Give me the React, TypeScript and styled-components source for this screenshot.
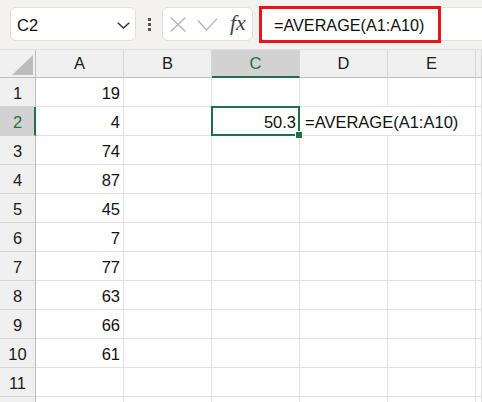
import styled, { createGlobalStyle } from "styled-components";

const GREEN = "#1e7145";

const Global = createGlobalStyle`
  html, body {
    margin: 0;
    padding: 0;
    background: #ffffff;
    overflow: hidden;
  }
  body {
    font-family: "Liberation Sans", Arial, sans-serif;
    color: #1b1b1b;
  }
`;

const Page = styled.div`
  width: 482px;
  height: 402px;
  overflow: hidden;
  background: #fff;
`;

// formula bar row
const Toolbar = styled.div`
  height: 50px;
  box-sizing: border-box;
  background: #f3f2f1;
  border-bottom: 1px solid #e1dfdd;
  display: flex;
  align-items: flex-start;
  padding: 7px 0 0 10px;
`;

const NameBox = styled.div`
  width: 126px;
  height: 34px;
  box-sizing: border-box;
  background: #fff;
  border: 1px solid #e1dfdd;
  border-radius: 6px;
  display: flex;
  align-items: center;
  justify-content: space-between;
  padding: 2px 5px 0 6px;
  font-size: 16.5px;
  color: #111;
`;

const Dots = styled.div`
  width: 26px;
  height: 34px;
  display: flex;
  flex-direction: column;
  align-items: center;
  justify-content: center;
  gap: 2px;
`;

const Dot = styled.span`
  width: 3px;
  height: 3px;
  background: #555;
`;

const FxBox = styled.div`
  width: 91px;
  height: 34px;
  box-sizing: border-box;
  background: #fff;
  border: 1px solid #e1dfdd;
  border-radius: 6px;
  display: flex;
  align-items: center;
  padding-left: 7px;
  gap: 11px;
`;

const FxLabel = styled.span`
  font-family: "Liberation Serif", "Times New Roman", serif;
  font-style: italic;
  font-size: 22px;
  color: #444;
  margin-left: 1px;
  margin-top: -3px;
`;

const FormulaField = styled.div`
  flex: 1;
  height: 34px;
  margin-left: 6px;
  box-sizing: border-box;
  background: #fff;
  border: 1px solid #e1dfdd;
  border-right: none;
  border-radius: 6px 0 0 6px;
  display: flex;
  align-items: flex-start;
`;

// red annotation round the formula text
const Highlight = styled.div`
  margin: -2px 0 0 -1px;
  width: 182px;
  height: 37px;
  box-sizing: border-box;
  border: 3px solid #e8141c;
  display: flex;
  align-items: center;
  padding: 1px 0 0 12px;
  font-size: 16.2px;
  color: #111;
  white-space: nowrap;
`;

// sheet
const Sheet = styled.div`
  display: grid;
  grid-template-columns: 36px repeat(5, 88px) 1fr;
  grid-template-rows: 28px;
  grid-auto-rows: 29px;
  font-size: 16.5px;
`;

const Corner = styled.div`
  background: #f0f0f0;
  border-right: 1px solid #bdbdbd;
  border-bottom: 1px solid #bdbdbd;
  display: flex;
  align-items: flex-end;
  justify-content: flex-end;
  padding: 0 2px 2px 0;
`;

const ColHead = styled.div<{ $active?: boolean }>`
  background: ${(p) => (p.$active ? "#d2d2d2" : "#f0f0f0")};
  color: ${(p) => (p.$active ? GREEN : "#1b1b1b")};
  border-right: 1px solid #d4d4d4;
  border-bottom: ${(p) => (p.$active ? `2px solid ${GREEN}` : "1px solid #bdbdbd")};
  display: flex;
  align-items: center;
  justify-content: center;
  padding-top: ${(p) => (p.$active ? "1px" : "0")};
`;

const RowHead = styled.div<{ $active?: boolean }>`
  background: ${(p) => (p.$active ? "#d2d2d2" : "#f0f0f0")};
  color: ${(p) => (p.$active ? GREEN : "#1b1b1b")};
  border-bottom: 1px solid #d4d4d4;
  border-right: ${(p) => (p.$active ? `2px solid ${GREEN}` : "1px solid #bdbdbd")};
  display: flex;
  align-items: center;
  justify-content: center;
  padding: ${(p) => (p.$active ? "2px 0 0 1px" : "2px 0 0 0")};
`;

const Cell = styled.div<{ $span?: number; $left?: boolean }>`
  position: relative;
  grid-column: span ${(p) => p.$span ?? 1};
  border-right: 1px solid #e1e1e1;
  border-bottom: 1px solid #e1e1e1;
  display: flex;
  align-items: center;
  justify-content: ${(p) => (p.$left ? "flex-start" : "flex-end")};
  padding: 2px ${(p) => (p.$left ? "0" : "3px")} 0 ${(p) => (p.$left ? "5px" : "0")};
  color: #111;
  white-space: nowrap;
`;

const Selection = styled.div`
  position: absolute;
  top: -1px;
  left: -1px;
  right: -1px;
  bottom: -1px;
  border: 2px solid ${GREEN};
  z-index: 2;
  pointer-events: none;
`;

const FillHandle = styled.div`
  position: absolute;
  right: -5px;
  bottom: -5px;
  width: 6px;
  height: 6px;
  background: ${GREEN};
  border: 1px solid #fff;
`;

const columns = ["A", "B", "C", "D", "E", ""];
const values = [19, 4, 74, 87, 45, 7, 77, 63, 66, 61];

function Chevron() {
  return (
    <svg width="13" height="7" viewBox="0 0 13 7">
      <polyline points="0.7,0.7 6.5,6 12.3,0.7" fill="none" stroke="#333" strokeWidth="1.5" />
    </svg>
  );
}

function CancelIcon() {
  return (
    <svg width="16" height="15" viewBox="0 0 16 15">
      <path d="M0.6 0.6 L15.4 14.4 M15.4 0.6 L0.6 14.4" stroke="#b3b3b3" strokeWidth="1.3" />
    </svg>
  );
}

function EnterIcon() {
  return (
    <svg width="21" height="13" viewBox="0 0 21 13">
      <polyline points="1,2.5 9.5,12 20,0.6" fill="none" stroke="#b3b3b3" strokeWidth="1.3" />
    </svg>
  );
}

function CornerMark() {
  return (
    <svg width="21" height="20" viewBox="0 0 21 20">
      <polygon points="21,0 21,20 0,20" fill="#bcbcbc" />
    </svg>
  );
}

function App() {
  // row 12 only peeks in at the bottom edge, its number is cut off
  const rows = Array.from({ length: 12 }, (_, i) => i + 1);
  return (
    <Page>
      <Global />
      <Toolbar>
        <NameBox>
          <span>C2</span>
          <Chevron />
        </NameBox>
        <Dots>
          <Dot />
          <Dot />
          <Dot />
        </Dots>
        <FxBox>
          <CancelIcon />
          <EnterIcon />
          <FxLabel>fx</FxLabel>
        </FxBox>
        <FormulaField>
          <Highlight>=AVERAGE(A1:A10)</Highlight>
        </FormulaField>
      </Toolbar>

      <Sheet>
        <Corner>
          <CornerMark />
        </Corner>
        {columns.map((c, i) => (
          <ColHead key={i} $active={c === "C"}>
            {c}
          </ColHead>
        ))}
        {rows.map((r) => (
          <Row key={r} r={r} />
        ))}
      </Sheet>
    </Page>
  );
}

function Row({ r }: { r: number }) {
  const v = values[r - 1];
  if (r === 2) {
    return (
      <>
        <RowHead $active>{r}</RowHead>
        <Cell>{v}</Cell>
        <Cell />
        <Cell>
          50.3
          <Selection>
            <FillHandle />
          </Selection>
        </Cell>
        <Cell $span={2} $left>
          =AVERAGE(A1:A10)
        </Cell>
        <Cell />
      </>
    );
  }
  return (
    <>
      <RowHead>{r <= 11 ? r : ""}</RowHead>
      <Cell>{v ?? ""}</Cell>
      <Cell />
      <Cell />
      <Cell />
      <Cell />
      <Cell />
    </>
  );
}

export default App;
